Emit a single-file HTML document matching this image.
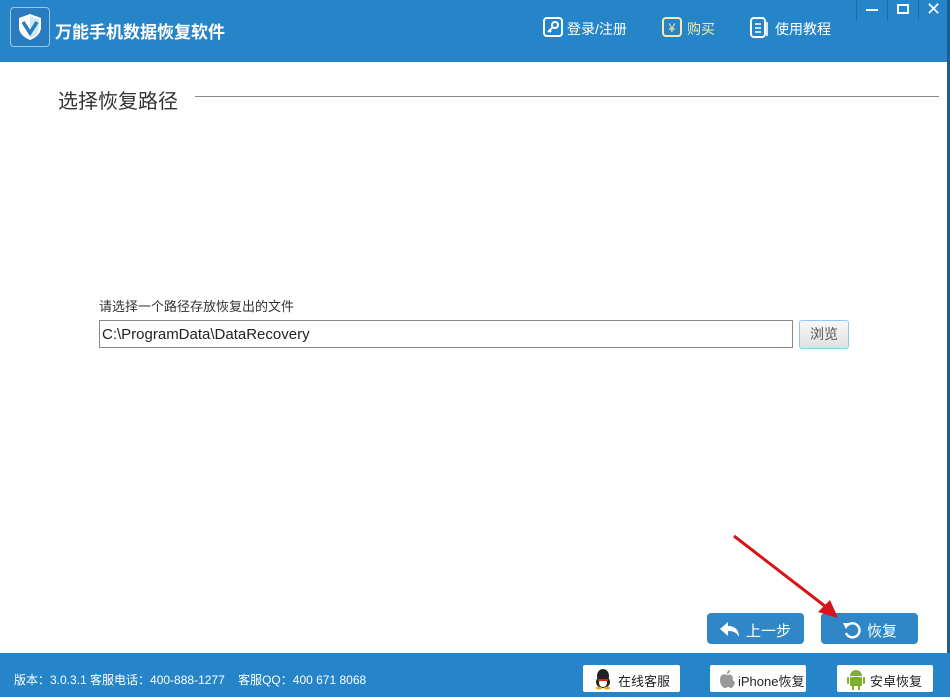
<!DOCTYPE html>
<html><head><meta charset="utf-8"><style>
*{margin:0;padding:0;box-sizing:border-box}
body{width:950px;height:697px;overflow:hidden;background:#fff;position:relative;font-family:"Liberation Sans","Microsoft YaHei","Noto Sans CJK SC",sans-serif}
.abs{position:absolute}
.top{left:0;top:0;width:950px;height:62px;background:#2685c8}
.bot{left:0;top:653px;width:950px;height:44px;background:#2685c8}
.w{color:#fff}
.btn{background:#2f87c8;border-radius:4px;color:#fff;font-size:15px}
.wb{background:#fff;border-radius:2px;font-size:13px;color:#222;}
</style></head><body>
<div class="abs top"></div>
<div class="abs" style="left:947px;top:0;width:3px;height:697px;background:#1b5f92"></div>
<div class="abs" style="left:10px;top:7px;width:40px;height:40px;border:1px solid #9cc7e8;border-radius:4px;background:#2a7cc0"></div>
<svg class="abs" style="left:16px;top:12px" width="28" height="30" viewBox="0 0 28 30"><path d="M14 2 L25 6 V15 C25 22 19 26 14 28 C9 26 3 22 3 15 V6 Z" fill="#fff"/><path d="M14 4 L23 7.5 V15 C23 21 18 24.5 14 26 Z" fill="#cde7f7"/><path d="M7 10 L14 21 L21 10" stroke="#2a7cc0" stroke-width="3.5" fill="none"/></svg>
<div class="abs w" style="left:55px;top:18px;font-size:17px;font-weight:bold">万能手机数据恢复软件</div>
<svg class="abs" style="left:543px;top:17px" width="20" height="20"><rect x="1" y="1" width="18" height="18" rx="3" fill="none" stroke="#fff" stroke-width="2"/><circle cx="12" cy="8" r="3" fill="none" stroke="#fff" stroke-width="2"/><path d="M10 10 L5 15 M6 13 L8 15" stroke="#fff" stroke-width="2"/></svg>
<div class="abs w" style="left:567px;top:19px;font-size:14px">登录/注册</div>
<svg class="abs" style="left:662px;top:17px" width="20" height="20"><rect x="1" y="1" width="18" height="18" rx="3" fill="none" stroke="#f6e9a8" stroke-width="2"/><text x="10" y="15" font-size="12" fill="#f6e9a8" text-anchor="middle">¥</text></svg>
<div class="abs" style="left:687px;top:19px;font-size:14px;color:#f6e9a8">购买</div>
<svg class="abs" style="left:750px;top:17px" width="20" height="21"><rect x="1" y="1" width="14" height="19" rx="3" fill="none" stroke="#fff" stroke-width="2"/><path d="M5 7h6M5 11h6M5 15h6M17 5v14" stroke="#fff" stroke-width="1.6"/></svg>
<div class="abs w" style="left:775px;top:19px;font-size:14px">使用教程</div>
<div class="abs" style="left:856px;top:0;width:1px;height:20px;background:#1d6aa6"></div>
<div class="abs" style="left:887px;top:0;width:1px;height:20px;background:#1d6aa6"></div>
<div class="abs" style="left:918px;top:0;width:1px;height:20px;background:#1d6aa6"></div>
<div class="abs" style="left:866px;top:9px;width:12px;height:2px;background:#fff"></div>
<div class="abs" style="left:897px;top:4px;width:12px;height:10px;border:2px solid #fff"></div>
<div class="abs w" style="left:926px;top:-1px;font-size:18px">✕</div>
<div class="abs" style="left:58px;top:85px;font-size:20px;color:#333">选择恢复路径</div>
<div class="abs" style="left:195px;top:96px;width:744px;height:1px;background:#888"></div>
<div class="abs" style="left:99px;top:296px;font-size:13px;color:#333">请选择一个路径存放恢复出的文件</div>
<div class="abs" style="left:99px;top:320px;width:694px;height:28px;border:1px solid #888;font-size:15px;color:#222;padding:5px 0 0 2px">C:\ProgramData\DataRecovery</div>
<div class="abs" style="left:799px;top:320px;width:50px;height:29px;border:1px solid #8ccbf0;border-radius:3px;background:linear-gradient(#f8f8f8,#e0e0e0);font-size:14px;color:#555;text-align:center;line-height:27px">浏览</div>
<div class="abs btn" style="left:707px;top:613px;width:97px;height:31px"></div>
<svg class="abs" style="left:718px;top:619px" width="24" height="20"><path d="M10 3 L2 10 L10 17 V12 C16 12 19 14 21 18 C21 11 17 7 10 7 Z" fill="#fff"/></svg>
<div class="abs w" style="left:746px;top:620px;font-size:15px">上一步</div>
<div class="abs btn" style="left:821px;top:613px;width:97px;height:31px"></div>
<svg class="abs" style="left:841px;top:618px" width="22" height="22"><path d="M6 8 A7 7 0 1 1 5 15" fill="none" stroke="#fff" stroke-width="2.4"/><path d="M2 5 L9 5 L5 11 Z" fill="#fff"/></svg>
<div class="abs w" style="left:867px;top:620px;font-size:15px">恢复</div>
<svg class="abs" style="left:730px;top:530px" width="120" height="100"><path d="M4 6 L100 80" stroke="#d8141a" stroke-width="3"/><path d="M108 88 L88 82 L100 70 Z" fill="#d8141a"/></svg>
<div class="abs bot"></div>
<div class="abs w" style="left:14px;top:671px;font-size:12px">版本：3.0.3.1 客服电话：400-888-1277&nbsp;&nbsp;&nbsp; 客服QQ：400 671 8068</div>
<div class="abs wb" style="left:583px;top:665px;width:97px;height:27px"></div>
<svg class="abs" style="left:594px;top:668px" width="18" height="22"><ellipse cx="9" cy="8" rx="6" ry="7" fill="#222"/><ellipse cx="9" cy="14" rx="7" ry="6" fill="#222"/><ellipse cx="9" cy="15" rx="4" ry="4" fill="#fff"/><rect x="4" y="11" width="10" height="2" fill="#d22"/><ellipse cx="5" cy="20" rx="3" ry="1.5" fill="#f0a000"/><ellipse cx="13" cy="20" rx="3" ry="1.5" fill="#f0a000"/></svg>
<div class="abs" style="left:618px;top:671px;font-size:13px;color:#222">在线客服</div>
<div class="abs wb" style="left:710px;top:665px;width:96px;height:27px"></div>
<svg class="abs" style="left:718px;top:669px" width="18" height="20"><path d="M9 6 C5 4 2 6 2 11 C2 16 5 19 7 19 C8 19 9 18 10 18 C11 18 12 19 13 19 C15 19 17 15 17 13 C15 12 14 10 15 8 C14 6 12 5 9 6 Z" fill="#999"/><path d="M9 5 C9 3 10 1 12 1 C12 3 11 5 9 5Z" fill="#999"/></svg>
<div class="abs" style="left:738px;top:671px;font-size:13px;color:#222">iPhone恢复</div>
<div class="abs wb" style="left:837px;top:665px;width:96px;height:27px"></div>
<svg class="abs" style="left:847px;top:668px" width="18" height="22"><path d="M3 8 A6 6 0 0 1 15 8 Z" fill="#7cb02c"/><rect x="3" y="9" width="12" height="9" rx="1" fill="#7cb02c"/><rect x="0" y="9" width="2" height="7" rx="1" fill="#7cb02c"/><rect x="16" y="9" width="2" height="7" rx="1" fill="#7cb02c"/><rect x="5" y="18" width="2" height="4" fill="#7cb02c"/><rect x="11" y="18" width="2" height="4" fill="#7cb02c"/></svg>
<div class="abs" style="left:870px;top:671px;font-size:13px;color:#222">安卓恢复</div>
</body></html>
